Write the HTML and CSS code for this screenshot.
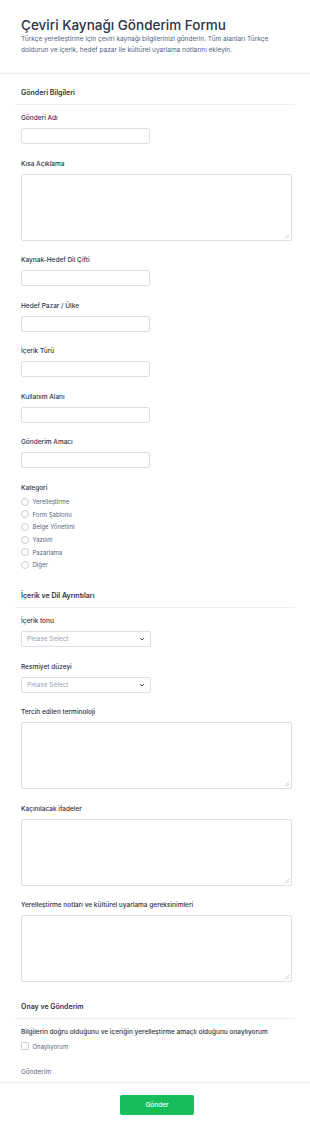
FILE: index.html
```html
<!DOCTYPE html>
<html lang="tr">
<head>
    <meta charset="UTF-8">
    <meta name="viewport" content="width=device-width, initial-scale=1.0">
    <title>Çeviri Kaynağı Gönderim Formu</title>
    <link rel="stylesheet" href="styles.css">
</head>
<body>
    <!-- Header -->
    <header class="form-header">
        <h1 class="form-title">Çeviri Kaynağı Gönderim Formu</h1>
        <p class="form-subtitle">Türkçe yerelleştirme için çeviri kaynağı bilgilerinizi gönderin. Tüm alanları Türkçe doldurun ve içerik, hedef pazar ile kültürel uyarlama notlarını ekleyin.</p>
    </header>

    <form class="form">
        <!-- Gönderi Bilgileri -->
        <section class="section">
            <h2 class="section-title">Gönderi Bilgileri</h2>
            <div class="section-body">
                <div class="field">
                    <label class="field-label">Gönderi Adı</label>
                    <input type="text" class="input input-short">
                </div>
                <div class="field">
                    <label class="field-label">Kısa Açıklama</label>
                    <textarea class="textarea"></textarea>
                </div>
                <div class="field">
                    <label class="field-label">Kaynak-Hedef Dil Çifti</label>
                    <input type="text" class="input input-short">
                </div>
                <div class="field">
                    <label class="field-label">Hedef Pazar / Ülke</label>
                    <input type="text" class="input input-short">
                </div>
                <div class="field">
                    <label class="field-label">İçerik Türü</label>
                    <input type="text" class="input input-short">
                </div>
                <div class="field">
                    <label class="field-label">Kullanım Alanı</label>
                    <input type="text" class="input input-short">
                </div>
                <div class="field">
                    <label class="field-label">Gönderim Amacı</label>
                    <input type="text" class="input input-short">
                </div>
                <div class="field">
                    <label class="field-label">Kategori</label>
                    <div class="option-list">
                        <label class="option"><span class="radio"></span>Yerelleştirme</label>
                        <label class="option"><span class="radio"></span>Form Şablonu</label>
                        <label class="option"><span class="radio"></span>Belge Yönetimi</label>
                        <label class="option"><span class="radio"></span>Yazılım</label>
                        <label class="option"><span class="radio"></span>Pazarlama</label>
                        <label class="option"><span class="radio"></span>Diğer</label>
                    </div>
                </div>
            </div>
        </section>

        <!-- İçerik ve Dil Ayrıntıları -->
        <section class="section">
            <h2 class="section-title">İçerik ve Dil Ayrıntıları</h2>
            <div class="section-body">
                <div class="field">
                    <label class="field-label">İçerik tonu</label>
                    <div class="select-wrap">
                        <select class="select">
                            <option>Please Select</option>
                        </select>
                        <svg class="chevron" width="6" height="4" viewBox="0 0 6 4"><path d="M1 1l2 2 2-2" fill="none" stroke="#343c52" stroke-width="0.9"/></svg>
                    </div>
                </div>
                <div class="field">
                    <label class="field-label">Resmiyet düzeyi</label>
                    <div class="select-wrap">
                        <select class="select">
                            <option>Please Select</option>
                        </select>
                        <svg class="chevron" width="6" height="4" viewBox="0 0 6 4"><path d="M1 1l2 2 2-2" fill="none" stroke="#343c52" stroke-width="0.9"/></svg>
                    </div>
                </div>
                <div class="field">
                    <label class="field-label">Tercih edilen terminoloji</label>
                    <textarea class="textarea"></textarea>
                </div>
                <div class="field">
                    <label class="field-label">Kaçınılacak ifadeler</label>
                    <textarea class="textarea"></textarea>
                </div>
                <div class="field">
                    <label class="field-label">Yerelleştirme notları ve kültürel uyarlama gereksinimleri</label>
                    <textarea class="textarea"></textarea>
                </div>
            </div>
        </section>

        <!-- Onay ve Gönderim -->
        <section class="section">
            <h2 class="section-title">Onay ve Gönderim</h2>
            <div class="section-body">
                <div class="field">
                    <label class="field-label">Bilgilerin doğru olduğunu ve içeriğin yerelleştirme amaçlı olduğunu onaylıyorum</label>
                    <div class="option-list">
                        <label class="option"><span class="checkbox"></span>Onaylıyorum</label>
                    </div>
                </div>
                <div class="field">
                    <span class="field-label field-label-plain">Gönderim</span>
                </div>
            </div>
        </section>

        <div class="form-footer">
            <button type="button" class="btn-submit">Gönder</button>
        </div>
    </form>
</body>
</html>
```

FILE: styles.css
```css
/* Reset and base styles */
* {
    margin: 0;
    padding: 0;
    box-sizing: border-box;
}

body {
    background: #fff;
    font-family: Inter, "Noto Sans", sans-serif;
    color: #2c3345;
}

/* Header */
.form-header {
    padding: 16px 21px 17px;
    border-bottom: 1px solid #eceef3;
}

.form-title {
    font-size: 13.5px;
    line-height: 18px;
    font-weight: 500;
    color: #2c3345;
}

.form-subtitle {
    font-size: 6.5px;
    line-height: 11px;
    color: #4f5d7e;
}

/* Sections */
.section {
    padding: 0 15px;
}

.section-title {
    padding: 14px 6px 6px;
    font-size: 7px;
    line-height: 10px;
    font-weight: 600;
    color: #2c3345;
    border-bottom: 1px solid #eceef3;
}

.section-body {
    display: flex;
    flex-direction: column;
    gap: 14.5px;
    padding: 8px 3px 6px 6px;
}

.section:last-of-type .section-body {
    padding-bottom: 5px;
}

/* Fields */
.field {
    display: flex;
    flex-direction: column;
}

.field-label {
    font-size: 6.5px;
    line-height: 10px;
    font-weight: 500;
    color: #2c3345;
    margin-bottom: 5px;
}

.field-label-plain {
    font-weight: 400;
    color: #57647e;
    margin-bottom: 0;
}

.input,
.textarea,
.select {
    display: block;
    border: 1px solid #dcdfe8;
    border-radius: 2px;
    background-color: #fff;
    font-family: inherit;
    font-size: 6.5px;
    color: #2c3345;
}

.input {
    height: 16px;
}

.input-short {
    width: 129px;
}

.textarea {
    width: 100%;
    height: 67px;
    resize: none;
    /* faint resize grip */
    background-image:
        linear-gradient(135deg, transparent 45%, #cfd3dc 45%, #cfd3dc 55%, transparent 55%),
        linear-gradient(135deg, transparent 45%, #cfd3dc 45%, #cfd3dc 55%, transparent 55%);
    background-size: 4px 4px, 2px 2px;
    background-position: right 2px bottom 2px, right 2px bottom 2px;
    background-repeat: no-repeat;
}

/* Select */
.select-wrap {
    position: relative;
    width: 130px;
}

.select {
    width: 100%;
    height: 16px;
    padding: 0 5px;
    appearance: none;
    color: #9aa1b4;
}

.chevron {
    position: absolute;
    right: 6px;
    top: 6px;
}

/* Radio / checkbox options */
.option-list {
    display: flex;
    flex-direction: column;
    margin-top: -2px;
}

.option {
    display: flex;
    align-items: center;
    gap: 3.5px;
    height: 12.6px;
    font-size: 6px;
    color: #57647e;
}

.radio {
    width: 8px;
    height: 8px;
    border: 1px solid #c9cedb;
    border-radius: 50%;
}

.checkbox {
    width: 8px;
    height: 8px;
    border: 1px solid #c9cedb;
    border-radius: 1px;
}

/* Footer */
.form-footer {
    display: flex;
    justify-content: center;
    padding: 12px 0 24px;
    border-top: 1px solid #eceef3;
}

.btn-submit {
    width: 74px;
    height: 19.5px;
    margin-left: 4px;
    border: none;
    border-radius: 2px;
    background: #18bd5b;
    color: #fff;
    font-family: inherit;
    font-size: 6.5px;
    font-weight: 500;
    cursor: pointer;
}
```
